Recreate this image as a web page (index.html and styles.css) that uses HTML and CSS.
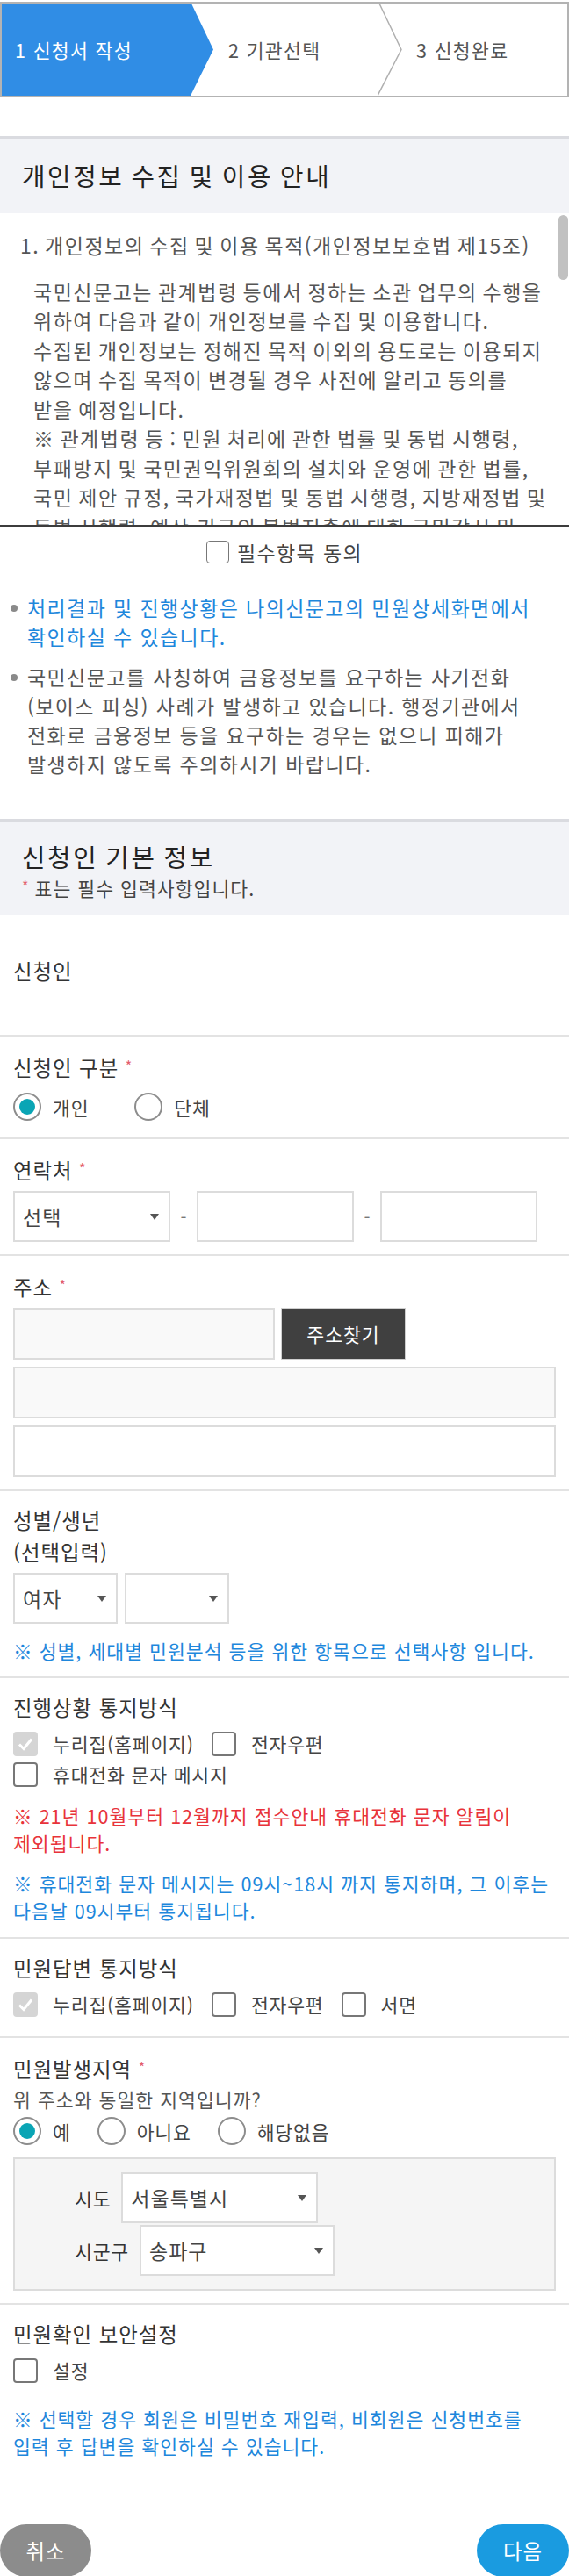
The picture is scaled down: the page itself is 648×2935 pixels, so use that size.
FILE: index.html
```html
<!DOCTYPE html>
<html lang="ko">
<head>
<meta charset="utf-8">
<title>신청서 작성</title>
<link rel="stylesheet" href="styles.css">
</head>
<body>
<div class="steps">
  <div class="step step-on">1 신청서 작성</div>
  <div class="step step-2">2 기관선택</div>
  <svg class="step-sep" viewBox="0 0 28 105" preserveAspectRatio="none"><polyline points="2,0 27,52.5 0,105" fill="none" stroke="#b0b0b0" stroke-width="1.5"/></svg>
  <div class="step step-3">3 신청완료</div>
</div>

<section class="sec-head sec-head-1">
  <h2>개인정보 수집 및 이용 안내</h2>
</section>
<div class="privacy">
  <p class="p-title">1. 개인정보의 수집 및 이용 목적(개인정보보호법 제15조)</p>
  <p class="p-body">국민신문고는 관계법령 등에서 정하는 소관 업무의 수행을<br>위하여 다음과 같이 개인정보를 수집 및 이용합니다.<br>수집된 개인정보는 정해진 목적 이외의 용도로는 이용되지<br>않으며 수집 목적이 변경될 경우 사전에 알리고 동의를<br>받을 예정입니다.<br>※ 관계법령 등 : 민원 처리에 관한 법률 및 동법 시행령,<br>부패방지 및 국민권익위원회의 설치와 운영에 관한 법률,<br>국민 제안 규정, 국가재정법 및 동법 시행령, 지방재정법 및<br>동법 시행령, 예산·기금의 불법지출에 대한 국민감시 및<br>시정요구 처리 규정</p>
  <span class="scroll-thumb"></span>
</div>
<div class="agree"><span class="agree-box"></span><span>필수항목 동의</span></div>

<ul class="notice">
  <li class="blue">처리결과 및 진행상황은 나의신문고의 민원상세화면에서 확인하실 수 있습니다.</li>
  <li>국민신문고를 사칭하여 금융정보를 요구하는 사기전화 (보이스 피싱) 사례가 발생하고 있습니다. 행정기관에서 전화로 금융정보 등을 요구하는 경우는 없으니 피해가 발생하지 않도록 주의하시기 바랍니다.</li>
</ul>

<section class="sec-head sec-head-2">
  <h2>신청인 기본 정보</h2>
  <p class="req-note"><span class="star">*</span> 표는 필수 입력사항입니다.</p>
</section>

<div class="row row-name">
  <div class="label">신청인</div>
</div>

<div class="row">
  <div class="label">신청인 구분 <span class="star">*</span></div>
  <div class="radios radios-type">
    <span class="opt"><span class="radio on"></span>개인</span>
    <span class="opt"><span class="radio"></span>단체</span>
  </div>
</div>

<div class="row">
  <div class="label">연락처 <span class="star">*</span></div>
  <div class="contact">
    <div class="select">선택</div>
    <span class="dash">-</span>
    <div class="input"></div>
    <span class="dash">-</span>
    <div class="input"></div>
  </div>
</div>

<div class="row">
  <div class="label">주소 <span class="star">*</span></div>
  <div class="addr">
    <div class="addr-top">
      <div class="input ro addr-zip"></div>
      <div class="btn-addr">주소찾기</div>
    </div>
    <div class="input ro"></div>
    <div class="input"></div>
  </div>
</div>

<div class="row">
  <div class="label">성별/생년<br>(선택입력)</div>
  <div class="gender">
    <div class="select sel-small">여자</div>
    <div class="select sel-small"></div>
  </div>
  <p class="note">※ 성별, 세대별 민원분석 등을 위한 항목으로 선택사항 입니다.</p>
</div>

<div class="row row-notify">
  <div class="label">진행상황 통지방식</div>
  <div class="checks">
    <div class="check-line">
      <span class="opt"><span class="chk dis"><svg viewBox="0 0 24 24"><polyline points="5,12.5 10,17.5 19,6.5" fill="none" stroke="#fff" stroke-width="3"/></svg></span>누리집(홈페이지)</span>
      <span class="opt"><span class="chk"></span>전자우편</span>
    </div>
    <div class="check-line">
      <span class="opt"><span class="chk"></span>휴대전화 문자 메시지</span>
    </div>
  </div>
  <p class="note red">※ 21년 10월부터 12월까지 접수안내 휴대전화 문자 알림이 제외됩니다.</p>
  <p class="note note-2">※ 휴대전화 문자 메시지는 09시~18시 까지 통지하며, 그 이후는 다음날 09시부터 통지됩니다.</p>
</div>

<div class="row row-answer">
  <div class="label">민원답변 통지방식</div>
  <div class="checks">
    <div class="check-line">
      <span class="opt"><span class="chk dis"><svg viewBox="0 0 24 24"><polyline points="5,12.5 10,17.5 19,6.5" fill="none" stroke="#fff" stroke-width="3"/></svg></span>누리집(홈페이지)</span>
      <span class="opt"><span class="chk"></span>전자우편</span>
      <span class="opt"><span class="chk"></span>서면</span>
    </div>
  </div>
</div>

<div class="row">
  <div class="label">민원발생지역 <span class="star">*</span></div>
  <div class="q">위 주소와 동일한 지역입니까?</div>
  <div class="radios radios-region">
    <span class="opt"><span class="radio on"></span>예</span>
    <span class="opt"><span class="radio"></span>아니요</span>
    <span class="opt"><span class="radio"></span>해당없음</span>
  </div>
  <div class="region">
    <div class="region-row"><span class="lbl">시도</span><div class="select sel-sido">서울특별시</div></div>
    <div class="region-row"><span class="lbl">시군구</span><div class="select sel-sigungu">송파구</div></div>
  </div>
</div>

<div class="row row-last">
  <div class="label">민원확인 보안설정</div>
  <div class="checks">
    <div class="check-line">
      <span class="opt"><span class="chk"></span>설정</span>
    </div>
  </div>
  <p class="note note-secure">※ 선택할 경우 회원은 비밀번호 재입력, 비회원은 신청번호를<br>입력 후 답변을 확인하실 수 있습니다.</p>
</div>

<div class="actions">
  <div class="btn btn-cancel">취소</div>
  <div class="btn btn-next">다음</div>
</div>
</body>
</html>
```
FILE: styles.css
```css
* { box-sizing: border-box; }
html, body { background: #fff; }
body {
  margin: 0;
  width: 648px;
  padding-bottom: 7px;
  font-family: "Noto Sans CJK KR", "Noto Sans", sans-serif;
  color: #333;
}

/* steps */
.steps {
  display: flex;
  height: 109px;
  margin-top: 2px;
  border: 2px solid #b3b3b3;
}
.step {
  display: flex;
  align-items: center;
  font-size: 21.6px;
  letter-spacing: 1.3px;
  color: #555;
}
.step-on {
  width: 243px;
  flex: none;
  padding-left: 15px;
  background: #308de5;
  color: #fff;
  clip-path: polygon(0 0, 216px 0, 241px 50%, 215px 100%, 0 100%);
}
.step-2 { width: 185px; flex: none; padding-left: 15px; }
.step-sep { width: 28px; height: 105px; flex: none; display: block; }
.step-3 { flex: 1; padding-left: 16px; }

/* section heads */
.sec-head {
  background: #f2f3f7;
  border-top: 3px solid #dadbe0;
}
.sec-head-1 { margin-top: 44px; padding: 22px 25px 23px; }
.sec-head-2 { margin-top: 46px; padding: 20px 25px 18px; }
h2 {
  margin: 0;
  font-size: 28.8px;
  font-weight: 400;
  line-height: 40px;
  letter-spacing: 2.6px;
  word-spacing: -2.6px;
  color: #222;
}
.req-note {
  margin: 0;
  font-size: 21.6px;
  line-height: 26px;
  letter-spacing: 1px;
  color: #444;
}
.star {
  color: #e35d6a;
  font-size: 16px;
  letter-spacing: 0;
  vertical-align: 5px;
}

/* privacy box */
.privacy {
  position: relative;
  height: 357px;
  overflow: hidden;
  border-bottom: 2px solid #3c3c3c;
  padding: 20px 10px 0 23px;
}
.p-title, .p-body {
  margin: 0;
  font-size: 23px;
  line-height: 33.5px;
  letter-spacing: 1.5px;
  word-spacing: -2px;
  color: #555;
  word-break: keep-all;
}
.p-body { margin-top: 19px; padding-left: 15px; }
.scroll-thumb {
  position: absolute;
  right: 1px;
  top: 2px;
  width: 11px;
  height: 74px;
  border-radius: 6px;
  background: #c1c1c1;
}

.agree {
  display: flex;
  justify-content: center;
  align-items: center;
  gap: 9px;
  height: 58px;
  font-size: 23px;
  letter-spacing: 1.4px;
  color: #444;
}
.agree-box {
  width: 26px;
  height: 26px;
  border: 1.5px solid #777;
  border-radius: 4px;
}

/* notice list */
.notice {
  list-style: none;
  margin: 18px 0 0;
  padding: 0 17px 0 31px;
}
.notice li {
  position: relative;
  font-size: 23px;
  line-height: 33px;
  letter-spacing: 1.4px;
  color: #555;
  word-break: keep-all;
}
.notice li + li { margin-top: 13px; }
.notice li::before {
  content: "";
  position: absolute;
  left: -19px;
  top: 13px;
  width: 8px;
  height: 8px;
  border-radius: 50%;
  background: #8a8a8a;
}
.notice .blue { color: #1e87dc; }

/* form rows */
.row {
  padding: 15px 15px 14px;
  border-bottom: 2px solid #e3e3e3;
}
.row-name { padding-top: 45px; padding-bottom: 55px; }
.row-notify { padding-bottom: 15px; }
.row-answer { padding-bottom: 19px; }
.row-last { border-bottom: none; }
.label {
  font-size: 23.4px;
  line-height: 36px;
  letter-spacing: 1px;
  color: #333;
}

.opt {
  display: flex;
  align-items: center;
  font-size: 21.6px;
  letter-spacing: 0.8px;
  color: #444;
}
.radios {
  display: flex;
  align-items: center;
  height: 42px;
  margin-top: 6px;
}
.radios-type { gap: 52px; }
.radios-region { height: 36px; margin-top: 1px; gap: 30px; }
.radio {
  width: 32px;
  height: 32px;
  margin-right: 13px;
  border: 2px solid #8d8d8d;
  border-radius: 50%;
  background: #fff;
  display: flex;
  align-items: center;
  justify-content: center;
}
.radio.on::after {
  content: "";
  width: 18px;
  height: 18px;
  border-radius: 50%;
  background: #0aa5b5;
}

.select {
  position: relative;
  height: 58px;
  border: 2px solid #dcdcdc;
  background: #fff;
  display: flex;
  align-items: center;
  padding-left: 9px;
  font-size: 23px;
  letter-spacing: 1px;
  color: #444;
}
.select::after {
  content: "";
  position: absolute;
  right: 11px;
  top: 50%;
  margin-top: -3px;
  border-top: 7px solid #555;
  border-left: 5px solid transparent;
  border-right: 5px solid transparent;
}
.input {
  height: 58px;
  border: 2px solid #dcdcdc;
  background: #fff;
}
.input.ro { background: #f9f9f9; }

.contact {
  display: grid;
  grid-template-columns: 179px 30px 179px 30px 179px;
  margin-top: 6px;
}
.dash {
  display: flex;
  align-items: center;
  justify-content: center;
  font-size: 20px;
  color: #777;
}

.addr {
  display: flex;
  flex-direction: column;
  gap: 8px;
  margin-top: 6px;
}
.addr .input { height: 59px; }
.addr-top { display: flex; gap: 7px; }
.addr-zip { width: 298px; }
.btn-addr {
  width: 142px;
  height: 59px;
  background: #404040;
  border: 1px solid #cfcfcf;
  color: #fff;
  font-size: 21.6px;
  letter-spacing: 1px;
  display: flex;
  align-items: center;
  justify-content: center;
}

.gender { display: flex; gap: 8px; margin-top: 6px; }
.sel-small { width: 119px; }

.note {
  margin: 15px 0 0;
  font-size: 21.6px;
  line-height: 31px;
  letter-spacing: 1px;
  color: #1e87dc;
  word-break: keep-all;
}
.note.red { color: #e8333a; margin-top: 14px; }
.note-secure { margin-top: 22px; }

.checks { margin-top: 6px; }
.check-line {
  display: flex;
  align-items: center;
  gap: 20px;
  height: 35px;
}
.chk {
  width: 28px;
  height: 28px;
  flex: none;
  margin-right: 17px;
  border: 2px solid #777;
  border-radius: 4px;
  background: #fff;
}
.chk.dis { background: #d5d5d5; border-color: #d5d5d5; }
.chk svg { display: block; width: 100%; height: 100%; }

.q {
  font-size: 21.6px;
  line-height: 34px;
  letter-spacing: 1px;
  color: #555;
}
.region {
  margin-top: 12px;
  background: #f5f5f5;
  border: 2px solid #dcdcdc;
  padding: 15px 0 15px 68px;
  display: flex;
  flex-direction: column;
  gap: 2px;
}
.region-row { display: flex; align-items: center; gap: 12px; }
.region-row .lbl { font-size: 21.6px; letter-spacing: 0.8px; color: #333; }
.sel-sido { width: 224px; }
.sel-sigungu { width: 222px; }

.actions {
  display: flex;
  justify-content: space-between;
  margin-top: 60px;
}
.btn {
  width: 104px;
  height: 60px;
  border-radius: 30px;
  color: #fff;
  font-size: 23.4px;
  letter-spacing: 1px;
  display: flex;
  align-items: center;
  justify-content: center;
}
.btn-cancel { background: #8c8c8c; }
.btn-next { background: #1a9be0; width: 105px; }
```
